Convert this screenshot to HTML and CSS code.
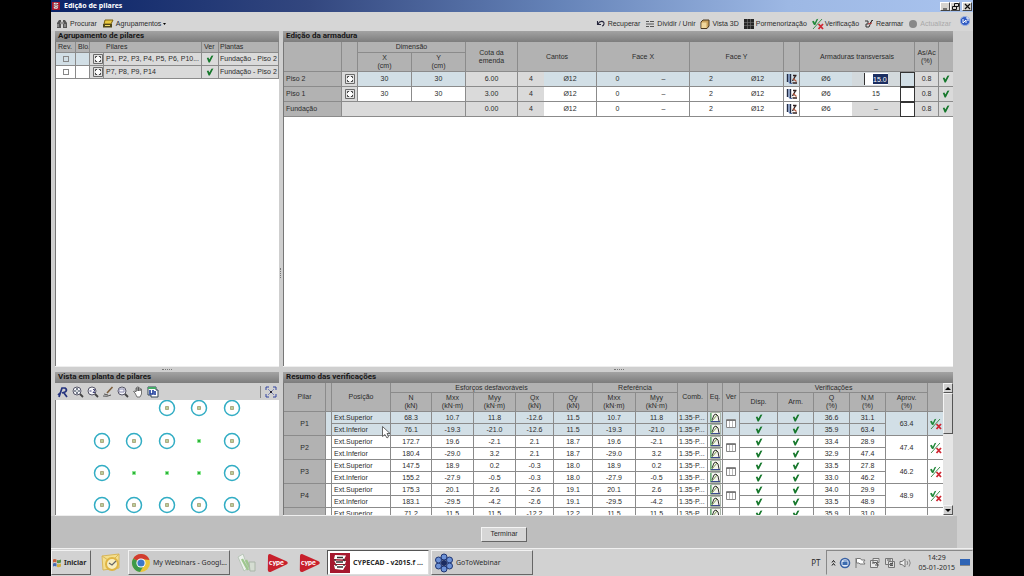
FILE: index.html
```html
<!DOCTYPE html>
<html lang="pt">
<head>
<meta charset="utf-8">
<title>Edição de pilares</title>
<link rel="stylesheet" href="styles.css">
</head>
<body>
<svg class="defs" aria-hidden="true">
  <symbol id="check" viewBox="0 0 8 8"><path d="M.8 3 2.400 2.500l1 2L5.400.8 7.400.4 3.800 7.400H2.600z" fill="#15772b"/></symbol>
  <symbol id="section" viewBox="0 0 10 10"><path d="M.5.5h9v9h-9z" fill="#e2e2e2" stroke="#6a6a6a"/><path d="M3 3h4v4H3z" fill="#fff"/><path d="M2.500 4V2.500H4M6 2.500h1.500V4M7.500 6v1.500H6M4 7.500H2.500V6" fill="none" stroke="#444"/></symbol>
  <symbol id="bars" viewBox="0 0 12 12"><path d="M1.500 1v8M4.500 1v9" stroke="#222c44" stroke-width="1.400"/><path d="M3 1v8q0 2 3 1.500" fill="none" stroke="#4668a8"/><path d="M6.500 8 10 2M7 2.500h3.500M6.500 10H11" stroke="#302020" stroke-width="1.400"/><path d="M7 5.500 10.500 8.500" stroke="#b4583c" stroke-width="1.200"/></symbol>
  <symbol id="graph" viewBox="0 0 11 11"><path d="M.5.5h10v10H.5z" fill="#f4f4ee" stroke="#a9b5a9"/><path d="M1 1v9" stroke="#3aa050"/><path d="M1 9.500h9" stroke="#3c4c90"/><path d="M2 8 4 3l2-1 2 2 1 5" fill="none" stroke="#333"/><path d="m2 9 5-6" stroke="#7c9a54"/></symbol>
  <symbol id="sheet" viewBox="0 0 10 9"><path d="M.5.5h9v8h-9z" fill="#fff" stroke="#888"/><path d="M0 1.500h10" stroke="#777"/><path d="M3.500 2v6M6.500 2v6" stroke="#bbb"/></symbol>
  <symbol id="verify" viewBox="0 0 12 12"><path d="m0 3.500 1.800-.8 1 2L4.500 1.300 6.300.8 3.300 7H2z" fill="#22883a"/><path d="M1 11 10 1" stroke="#3f8f4e"/><path d="m6.500 6 4.500 5M11 6l-4.500 5" stroke="#cf2733" stroke-width="1.800"/></symbol>
  <symbol id="cad" viewBox="0 0 20 20"><path d="M0 0h20v20H0z" fill="#a5182e"/><path d="m5 2 11 .5-2 4L4 6zM4 7.500l12 .5-1 3H6zM4 12h12l-3 5-8-1z" fill="#fff"/><path d="M7 4.500h6M6 9h7M7 14h6M5 6v2M13 6l2 2M6 11v2M14 11v2" fill="none" stroke="#333" stroke-width="1.300"/></symbol>
  <symbol id="lens" viewBox="0 0 12 12"><circle cx="5" cy="5" r="4" fill="#f4f4fa" stroke="#555566"/><path d="m8 8 3 3" stroke="#444" stroke-width="1.800"/></symbol>
</svg>
<div class="app">
  <header class="titlebar">
    <svg width="8" height="8"><use href="#cad"/></svg>
    <h1>Edição de pilares</h1>
    <span class="winbtns">
      <button aria-label="Minimizar"><svg width="7" height="7"><path d="M1 6h4" stroke="#111"/></svg></button>
      <button aria-label="Restaurar"><svg width="7" height="7"><path d="M2.500.5h4v3h-4zM.5 3.500h4v3h-4z" fill="none" stroke="#111"/></svg></button>
      <button aria-label="Fechar" class="close"><svg width="7" height="7"><path d="m1 1 5 5M6 1 1 6" stroke="#111" stroke-width="1.200"/></svg></button>
    </span>
  </header>

  <nav class="toolbar">
    <button><svg width="12" height="10"><path d="M1 9V4l2-3h2v8zM7 9V1h2l2 3v5z" fill="#555"/><path d="M5 3h2v2H5zM2 5v3M9 5v3" fill="#222" stroke="#bbb"/></svg>Procurar</button>
    <button><svg width="12" height="10"><path d="m3 1h8L9 5H2z" fill="#e8c940" stroke="#7a6112"/><path d="M1 5h9v3.500H1z" fill="#4f4718"/><path d="M3 6.500h5" stroke="#f3dc66"/></svg>Agrupamentos <svg width="3" height="3"><path d="M0 1h3L1.500 3z"/></svg></button>
    <span class="spacer"></span>
    <button><svg width="10" height="10"><path d="M1.500 2v3.500H5M2 5C4 1 8.500 2 8 5q-.5 2-2 2" fill="none" stroke="#26263c" stroke-width="1.100"/></svg>Recuperar</button>
    <button><svg width="10" height="10"><path d="M1 2.500h3M5 2.500h4M1 5h8M1 7.500h3M5 7.500h4" stroke="#555"/></svg>Dividir / Unir</button>
    <button><svg width="10" height="10"><path d="m1 3 2-2h6v6L7 9.500H1z" fill="#c9a15c" stroke="#4a3820"/><path d="M1.500 3.500h5v5.500h-5z" fill="#f0d79d"/></svg>Vista 3D</button>
    <button><svg width="10" height="10"><path d="M0 0h10v10H0z" fill="#252525"/><path d="M3.500 0v10M6.500 0v10M0 3.500h10M0 6.500h10" stroke="#777" stroke-width=".6"/></svg>Pormenorização</button>
    <button class="tight"><svg width="12" height="12"><use href="#verify"/></svg>Verificação</button>
    <button><svg width="10" height="10"><path d="M1 2h3v3H2v3h3M8 1 5 8M9 1 6 4" fill="none" stroke="#333"/><path d="m4 5 4-1" stroke="#b33"/></svg>Rearmar</button>
    <button disabled><svg width="10" height="10"><circle cx="5" cy="5" r="4" fill="#888"/></svg>Actualizar</button>
    <a class="help" href="#ajuda" aria-label="Ajuda"><svg width="10" height="10"><ellipse cx="5" cy="5" rx="4.800" ry="4.500" fill="#315cc4" stroke="#9db2e0"/><path d="M3 3v4l3-3v3M6 2h2v3" fill="none" stroke="#fff"/></svg></a>
  </nav>

  <main class="work">
    <section class="panel">
      <h2>Agrupamento de pilares</h2>
      <div class="body">
        <table class="grid groups">
          <colgroup><col class="w20"><col class="w14"><col class="w14"><col class="w98"><col class="w17"><col class="w60"></colgroup>
          <thead><tr><th>Rev.</th><th>Blo.</th><th class="nb"></th><th>Pilares</th><th>Ver</th><th>Plantas</th></tr></thead>
          <tbody>
            <tr class="sel"><td class="mid"><input type="checkbox" aria-label="Rev. P1"></td><td></td><td class="g"><svg width="10" height="10"><use href="#section"/></svg></td><td class="g">P1, P2, P3, P4, P5, P6, P10...</td><td class="g mid"><svg width="8" height="8"><use href="#check"/></svg></td><td class="g">Fundação - Piso 2</td></tr>
            <tr><td class="mid"><input type="checkbox" aria-label="Rev. P7"></td><td></td><td class="g"><svg width="10" height="10"><use href="#section"/></svg></td><td class="g">P7, P8, P9, P14</td><td class="g mid"><svg width="8" height="8"><use href="#check"/></svg></td><td class="g">Fundação - Piso 2</td></tr>
          </tbody>
        </table>
      </div>
    </section>

    <section class="panel">
      <h2>Edição da armadura</h2>
      <div class="body">
        <table class="grid rebar">
          <colgroup><col class="w58"><col class="w16"><col class="w54"><col class="w54"><col class="w52"><col class="w26"><col class="w53"><col class="w41"><col class="w52"><col class="w42"><col class="w52"><col class="w16"><col class="w52"><col class="w48"><col class="w15"><col class="w24"><col class="w15"></colgroup>
          <thead>
            <tr class="h1"><th rowspan="2"></th><th rowspan="2"></th><th colspan="2">Dimensão</th><th rowspan="2">Cota da<br>emenda</th><th rowspan="2" colspan="2">Cantos</th><th rowspan="2" colspan="2">Face X</th><th rowspan="2" colspan="2">Face Y</th><th rowspan="2"></th><th rowspan="2" colspan="3">Armaduras transversais</th><th rowspan="2">As/Ac<br>(%)</th><th rowspan="2"></th></tr>
            <tr class="h2"><th>X<br>(cm)</th><th>Y<br>(cm)</th></tr>
          </thead>
          <tbody>
            <tr class="sel"><th>Piso 2</th><td class="g"><svg width="10" height="10"><use href="#section"/></svg></td><td>30</td><td>30</td><td class="g">6.00</td><td class="g nb">4</td><td>Ø12</td><td class="nb">0</td><td>–</td><td class="nb">2</td><td>Ø12</td><td><svg width="12" height="12"><use href="#bars"/></svg></td><td class="nb">Ø6</td><td class="edit nb"><input type="text" value="15.0" aria-label="Separação"></td><td class="box"></td><td class="g">0.8</td><td class="g"><svg width="8" height="8"><use href="#check"/></svg></td></tr>
            <tr><th>Piso 1</th><td class="g"><svg width="10" height="10"><use href="#section"/></svg></td><td>30</td><td>30</td><td class="g">3.00</td><td class="g nb">4</td><td>Ø12</td><td class="nb">0</td><td>–</td><td class="nb">2</td><td>Ø12</td><td><svg width="12" height="12"><use href="#bars"/></svg></td><td class="nb">Ø6</td><td class="nb">15</td><td class="box"></td><td class="g">0.8</td><td class="g"><svg width="8" height="8"><use href="#check"/></svg></td></tr>
            <tr><th>Fundação</th><td class="g" colspan="3"></td><td class="g">0.00</td><td class="g nb">4</td><td>Ø12</td><td class="nb">0</td><td>–</td><td class="nb">2</td><td>Ø12</td><td><svg width="12" height="12"><use href="#bars"/></svg></td><td class="nb">Ø6</td><td class="g nb">–</td><td class="box"></td><td class="g">0.8</td><td class="g"><svg width="8" height="8"><use href="#check"/></svg></td></tr>
          </tbody>
        </table>
      </div>
    </section>

    <section class="panel">
      <h2>Vista em planta de pilares</h2>
      <div class="tools">
        <button aria-label="Redesenhar"><svg width="12" height="12"><path d="M2 11 5 2h3q3 2 0 4L5 7M7 7l3 4M1 9l2-2" fill="none" stroke="#24337e" stroke-width="1.700"/></svg></button>
        <button aria-label="Ver tudo"><svg width="12" height="12"><use href="#lens"/><path d="M5 2v6M2 5h6" stroke="#234" stroke-width="1.200"/><circle cx="5" cy="5" r="1" fill="#fff"/></svg></button>
        <button aria-label="Zoom x2"><svg width="12" height="12"><use href="#lens"/><path d="M2.500 5h2M6 3.500h1.500V5L6 6.500h2" fill="none" stroke="#447"/></svg></button>
        <button aria-label="Desenhar"><svg width="12" height="12"><path d="M10.500 1 5 7" stroke="#7b5c3a" stroke-width="1.600"/><path d="M1 10q4 1 8-1M2 8l4 1" fill="none" stroke="#555"/></svg></button>
        <button aria-label="Zoom janela"><svg width="12" height="12"><use href="#lens"/><path d="M2 3h5v3H2z" fill="none" stroke="#88a"/></svg></button>
        <button aria-label="Mover"><svg width="12" height="12"><path d="M3 7 1.500 5.500 3 5l1 1V2h1v3-4h1.500v4V2H8v3-2h1.500v5L8 11H5z" fill="#fff" stroke="#555" stroke-width=".8"/></svg></button>
        <button aria-label="Imprimir"><svg width="12" height="12"><path d="M1 1h8v3h2v7H4V9H1z" fill="#fff" stroke="#345"/><path d="M1 1h8v2H1z" fill="#4a6"/><path d="M3 4v4h3V4M8 5v4" fill="none" stroke="#1c3d9b" stroke-width="1.600"/></svg></button>
        <span class="spacer"></span>
        <button class="fit" aria-label="Ajustar"><svg width="12" height="12"><path d="M1 4V1h3M8 1h3v3M11 8v3H8M4 11H1V8" fill="none" stroke="#3345a0"/><path d="m3 3 6 6M9 3 3 9" stroke="#7a82b4"/><path d="M5 5h2v2H5z" fill="#223"/></svg></button>
      </div>
      <div class="body">
        <svg class="plan" width="222" height="114" role="img" aria-label="Planta de pilares">
          <g fill="none" stroke="#32adc4" stroke-width="1.500">
            <circle cx="111" cy="8" r="7.500"/><circle cx="143" cy="8" r="7.500"/><circle cx="176" cy="8" r="7.500"/>
            <circle cx="46" cy="41" r="7.500"/><circle cx="78" cy="41" r="7.500"/><circle cx="111" cy="41" r="7.500"/><circle cx="176" cy="41" r="7.500"/>
            <circle cx="46" cy="73" r="7.500"/><circle cx="176" cy="73" r="7.500"/>
            <circle cx="46" cy="105" r="7.500"/><circle cx="78" cy="105" r="7.500"/><circle cx="111" cy="105" r="7.500"/><circle cx="143" cy="105" r="7.500"/><circle cx="176" cy="105" r="7.500"/>
          </g>
          <path fill="#b9cf9a" stroke="#a39a70" stroke-width=".8" d="M109.500 6.500h3v3h-3zM141.500 6.500h3v3h-3zM174.500 6.500h3v3h-3zM44.500 39.500h3v3h-3zM76.500 39.500h3v3h-3zM109.500 39.500h3v3h-3zM174.500 39.500h3v3h-3zM44.500 71.500h3v3h-3zM174.500 71.500h3v3h-3zM44.500 103.500h3v3h-3zM76.500 103.500h3v3h-3zM109.500 103.500h3v3h-3zM141.500 103.500h3v3h-3zM174.500 103.500h3v3h-3z"/>
          <path fill="#2fae3a" stroke="#8ae890" d="M141.500 39.500h3v3h-3zM76.500 71.500h3v3h-3zM109.500 71.500h3v3h-3zM141.500 71.500h3v3h-3z"/>
        </svg>
      </div>
    </section>

    <section class="panel results">
      <h2>Resumo das verificações</h2>
      <div class="scroller">
      <div class="body">
        <table class="grid checks">
          <colgroup><col class="w42"><col class="w6"><col class="w59"><col class="w41"><col class="w42"><col class="w42"><col class="w38"><col class="w39"><col class="w43"><col class="w42"><col class="w30"><col class="w15"><col class="w17"><col class="w38"><col class="w36"><col class="w36"><col class="w36"><col class="w42"><col class="w16"></colgroup>
          <thead>
            <tr class="h1"><th rowspan="2">Pilar</th><th rowspan="2"></th><th rowspan="2">Posição</th><th colspan="5">Esforços desfavoráveis</th><th colspan="2">Referência</th><th rowspan="2">Comb.</th><th rowspan="2">Eq.</th><th rowspan="2">Ver</th><th colspan="5">Verificações</th><th rowspan="2"></th></tr>
            <tr class="h2"><th>N<br>(kN)</th><th>Mxx<br>(kN·m)</th><th>Myy<br>(kN·m)</th><th>Qx<br>(kN)</th><th>Qy<br>(kN)</th><th>Mxx<br>(kN·m)</th><th>Myy<br>(kN·m)</th><th>Disp.</th><th>Arm.</th><th>Q<br>(%)</th><th>N,M<br>(%)</th><th>Aprov.<br>(%)</th></tr>
          </thead>
          <tbody>
            <tr class="sel"><th rowspan="2">P1</th><td rowspan="2"></td><td class="pos">Ext.Superior</td><td>68.3</td><td>10.7</td><td>11.8</td><td>-12.6</td><td>11.5</td><td>10.7</td><td>11.8</td><td class="cmb">1.35·P...</td><td><svg width="11" height="11"><use href="#graph"/></svg></td><td rowspan="2"><svg width="10" height="9"><use href="#sheet"/></svg></td><td><svg width="8" height="8"><use href="#check"/></svg></td><td><svg width="8" height="8"><use href="#check"/></svg></td><td>36.6</td><td>31.1</td><td rowspan="2">63.4</td><td rowspan="2"><svg width="12" height="12"><use href="#verify"/></svg></td></tr>
            <tr class="sel"><td class="pos">Ext.Inferior</td><td>76.1</td><td>-19.3</td><td>-21.0</td><td>-12.6</td><td>11.5</td><td>-19.3</td><td>-21.0</td><td class="cmb">1.35·P...</td><td><svg width="11" height="11"><use href="#graph"/></svg></td><td><svg width="8" height="8"><use href="#check"/></svg></td><td><svg width="8" height="8"><use href="#check"/></svg></td><td>35.9</td><td>63.4</td></tr>
            <tr><th rowspan="2">P2</th><td rowspan="2"></td><td class="pos">Ext.Superior</td><td>172.7</td><td>19.6</td><td>-2.1</td><td>2.1</td><td>18.7</td><td>19.6</td><td>-2.1</td><td class="cmb">1.35·P...</td><td><svg width="11" height="11"><use href="#graph"/></svg></td><td rowspan="2"><svg width="10" height="9"><use href="#sheet"/></svg></td><td><svg width="8" height="8"><use href="#check"/></svg></td><td><svg width="8" height="8"><use href="#check"/></svg></td><td>33.4</td><td>28.9</td><td rowspan="2">47.4</td><td rowspan="2"><svg width="12" height="12"><use href="#verify"/></svg></td></tr>
            <tr><td class="pos">Ext.Inferior</td><td>180.4</td><td>-29.0</td><td>3.2</td><td>2.1</td><td>18.7</td><td>-29.0</td><td>3.2</td><td class="cmb">1.35·P...</td><td><svg width="11" height="11"><use href="#graph"/></svg></td><td><svg width="8" height="8"><use href="#check"/></svg></td><td><svg width="8" height="8"><use href="#check"/></svg></td><td>32.9</td><td>47.4</td></tr>
            <tr><th rowspan="2">P3</th><td rowspan="2"></td><td class="pos">Ext.Superior</td><td>147.5</td><td>18.9</td><td>0.2</td><td>-0.3</td><td>18.0</td><td>18.9</td><td>0.2</td><td class="cmb">1.35·P...</td><td><svg width="11" height="11"><use href="#graph"/></svg></td><td rowspan="2"><svg width="10" height="9"><use href="#sheet"/></svg></td><td><svg width="8" height="8"><use href="#check"/></svg></td><td><svg width="8" height="8"><use href="#check"/></svg></td><td>33.5</td><td>27.8</td><td rowspan="2">46.2</td><td rowspan="2"><svg width="12" height="12"><use href="#verify"/></svg></td></tr>
            <tr><td class="pos">Ext.Inferior</td><td>155.2</td><td>-27.9</td><td>-0.5</td><td>-0.3</td><td>18.0</td><td>-27.9</td><td>-0.5</td><td class="cmb">1.35·P...</td><td><svg width="11" height="11"><use href="#graph"/></svg></td><td><svg width="8" height="8"><use href="#check"/></svg></td><td><svg width="8" height="8"><use href="#check"/></svg></td><td>33.0</td><td>46.2</td></tr>
            <tr><th rowspan="2">P4</th><td rowspan="2"></td><td class="pos">Ext.Superior</td><td>175.3</td><td>20.1</td><td>2.6</td><td>-2.6</td><td>19.1</td><td>20.1</td><td>2.6</td><td class="cmb">1.35·P...</td><td><svg width="11" height="11"><use href="#graph"/></svg></td><td rowspan="2"><svg width="10" height="9"><use href="#sheet"/></svg></td><td><svg width="8" height="8"><use href="#check"/></svg></td><td><svg width="8" height="8"><use href="#check"/></svg></td><td>34.0</td><td>29.9</td><td rowspan="2">48.9</td><td rowspan="2"><svg width="12" height="12"><use href="#verify"/></svg></td></tr>
            <tr><td class="pos">Ext.Inferior</td><td>183.1</td><td>-29.5</td><td>-4.2</td><td>-2.6</td><td>19.1</td><td>-29.5</td><td>-4.2</td><td class="cmb">1.35·P...</td><td><svg width="11" height="11"><use href="#graph"/></svg></td><td><svg width="8" height="8"><use href="#check"/></svg></td><td><svg width="8" height="8"><use href="#check"/></svg></td><td>33.5</td><td>48.9</td></tr>
            <tr><th></th><td></td><td class="pos">Ext.Superior</td><td>71.2</td><td>11.5</td><td>11.5</td><td>-12.2</td><td>12.2</td><td>11.5</td><td>11.5</td><td class="cmb">1.35·P...</td><td><svg width="11" height="11"><use href="#graph"/></svg></td><td></td><td><svg width="8" height="8"><use href="#check"/></svg></td><td><svg width="8" height="8"><use href="#check"/></svg></td><td>35.9</td><td>31.0</td><td></td><td></td></tr>
          </tbody>
        </table>
      </div>
      <div class="scrollbar">
        <button aria-label="Subir"><svg width="7" height="5"><path d="M0 4h6L3 1z"/></svg></button>
        <span class="thumb"></span>
        <button class="down" aria-label="Descer"><svg width="7" height="5"><path d="M0 1h6L3 4z"/></svg></button>
      </div>
      </div>
      <svg class="pointer" width="9" height="13"><path d="M.5.5v10L3 8.500 5 12l1.500-1L5 7.500h3z" fill="#fff" stroke="#444" stroke-width=".8"/></svg>
    </section>
    <span class="grip top" aria-hidden="true"></span>
    <span class="grip side" aria-hidden="true"></span>
    <span class="grip low" aria-hidden="true"></span>
  </main>

  <footer class="actions"><button>Terminar</button></footer>

  <div class="taskbar">
    <button class="start"><svg width="10" height="10"><path d="M1 1.500q2-1 3.500 0v3q-2-1-3.500 0z" fill="#c8603c"/><path d="M5 2q2 .8 4-.5v3q-2 1-4 .5z" fill="#57914c"/><path d="M1 5.500q2-1 3.500 0v3q-2-1-3.500 0z" fill="#4568b0"/><path d="M5 6q2 .8 4-.5v3q-2 1-4 .5z" fill="#d4b040"/></svg>Iniciar</button>
    <a class="quick mail" href="#outlook" aria-label="Outlook"><svg width="22" height="22"><path d="M2 4 19 2v14L3 18z" fill="#f4df8d" stroke="#d8b65a"/><path d="m2 4 9 6 8-8" fill="none" stroke="#d8b65a"/><circle cx="12" cy="12" r="6" fill="#f8eec0" stroke="#e0b544" stroke-width="2"/><path d="m9 11 3 2 4-4" fill="none" stroke="#666" stroke-width="1.200"/></svg></a>
    <button class="task"><svg width="20" height="20"><circle cx="10" cy="10" r="9" fill="#e9c53a"/><path d="M10 10 2.200 5.500A9 9 0 0 1 18.500 7L10 6z" fill="#d13c30"/><path d="M10 10 2.200 5.500A9 9 0 0 0 9 19l4-7z" fill="#3f9a4a"/><circle cx="10" cy="10" r="4.600" fill="#fff"/><circle cx="10" cy="10" r="3.600" fill="#3c78c8"/></svg>My Webinars - Googl...</button>
    <a class="quick msn" href="#docs" aria-label="Documentos"><svg width="20" height="20"><path d="m1 4 5-3 5 14-4 3z" fill="#eef3ee" stroke="#b9c6b9"/><path d="m5 6 6 11M9 7l5 10" stroke="#9fc78f" stroke-width="2.400"/><path d="M12 9h6v9h-5z" fill="#d5ddd2" stroke="#aab5a8"/></svg></a>
    <a class="quick logo" href="#cype1" aria-label="CYPE"><svg width="22" height="20"><path d="M3 1 19.500 8.200q2.500 1.600 0 3.400L3.500 19Q.8 19.500.8 17L1 3Q1 .8 3 1z" fill="#c8202c"/><text x="2" y="12">cype</text></svg></a>
    <a class="quick logo" href="#cype2" aria-label="CYPE"><svg width="22" height="20"><path d="M3 1 19.500 8.200q2.500 1.600 0 3.400L3.500 19Q.8 19.500.8 17L1 3Q1 .8 3 1z" fill="#c8202c"/><text x="2" y="12">cype</text></svg></a>
    <button class="task active"><svg width="20" height="20"><use href="#cad"/></svg>CYPECAD - v2015.f ...</button>
    <button class="task"><svg width="20" height="20"><g fill="#6d92d6" stroke="#1e3472"><circle cx="10" cy="4" r="3"/><circle cx="15.500" cy="7" r="3"/><circle cx="15.500" cy="13" r="3"/><circle cx="10" cy="16" r="3"/><circle cx="4.500" cy="13" r="3"/><circle cx="4.500" cy="7" r="3"/></g><circle cx="10" cy="10" r="3" fill="#1c2c60"/></svg>GoToWebinar</button>
    <span class="spacer"></span>
    <span class="lang">PT</span>
    <div class="tray">
      <svg width="5" height="8"><path d="m1 3.500 1.500-2L4 3.500M1 6.500l1.500-2 1.500 2" fill="none" stroke="#111"/></svg>
      <svg width="12" height="12"><circle cx="6" cy="6" r="4.500" fill="#dfe8f6" stroke="#3a62a4" stroke-width="1.600"/><path d="M3.500 5h5v3h-5z" fill="#3c6cb0"/><path d="M4.500 4h4" stroke="#3c6cb0"/></svg>
      <svg width="12" height="12"><path d="M2 1v10" stroke="#777"/><path d="M2.500 1.500h4l1 1.500H11l-1.500 2L11 7H6L5 6H2.500z" fill="#fff" stroke="#777"/></svg>
      <svg width="12" height="12"><path d="M1.500 3.500h7v7h-7zM4 1.500h6v4H4z" fill="#e8e8e8" stroke="#777"/><path d="M3 6h3M6 5l3 3M6 8h4" stroke="#555"/></svg>
      <svg width="12" height="12"><path d="M1.500 1.500h7v6h-7zM4.500 4.500h6v6h-6z" fill="#ddd" stroke="#777"/><path d="M6 6.500h3M6 8.500h3M3 3h4" stroke="#555"/></svg>
      <svg width="12" height="12"><path d="M1 4.500h2L6 2v8L3 7.500H1z" fill="#eee" stroke="#777"/><path d="M8 4q1.500 2 0 4M10 2.500q2.500 3.500 0 7" fill="none" stroke="#888"/></svg>
      <span class="clock">14:29<br>05-01-2015</span>
      <svg width="11" height="9"><path d="M1 1h10v6H1z" fill="#2f64b5"/><path d="M1 7.500h10" stroke="#888"/></svg>
    </div>
  </div>
</div>
</body>
</html>
```
FILE: styles.css
```css
* { box-sizing: border-box; }
body {
  margin: 0;
  background: #000;
  color: #2b2b2b;
  font: 7px/8px "Liberation Sans", Arial, sans-serif;
}
button, input { font: inherit; color: inherit; margin: 0; padding: 0; border: 0; background: none; }
svg { display: block; flex: none; }
.defs { position: absolute; width: 0; height: 0; }
.spacer { flex: 1; }

.app {
  display: grid;
  grid-template-rows: 12px 19px minmax(0, 1fr) 32px 28px;
  height: 100vh;
  margin: 0 51px;
  background: #cfcfcf;
}

.titlebar {
  display: flex;
  align-items: center;
  gap: 4px;
  padding: 0 1px;
  background: linear-gradient(90deg, #0b2468, #33477f 28%, #6583b8 55%, #9db8e4 80%, #a9c3ee);
}
h1 { flex: 1; margin: 0; color: #fff; font: bold 7px/10px "Noto Sans", sans-serif; }
.winbtns { display: flex; }
.winbtns button { display: grid; place-items: center; width: 10px; height: 9px; background: #d6d3ce; border: 1px solid; border-color: #fff #444 #444 #fff; }
.winbtns .close { margin-left: 2px; }

.toolbar { display: flex; align-items: center; gap: 5px; padding: 4px 3px 0 5px; background: #d6d6d6; }
.toolbar button { display: flex; align-items: center; gap: 2px; white-space: nowrap; }
.toolbar .tight { gap: 1px; }
.toolbar button:disabled { color: #a9a9a9; }
.help { margin: 0 0 5px 4px; }

.work {
  position: relative;
  display: grid;
  grid-template: minmax(0, 1fr) 144px / 224px minmax(0, 1fr);
  gap: 5px 4px;
  padding: 0 20px 0 4px;
}
.panel { position: relative; display: flex; flex-direction: column; min-height: 0; border-bottom: 1px solid #eee; }
h2 {
  margin: 0;
  padding: 0 3px 1px;
  background: linear-gradient(#a3a3a3, #7d7d7d);
  color: #161616;
  font: bold 8px/10px Roboto, sans-serif;
}
.body { flex: 1; min-height: 0; min-width: 0; overflow: hidden; background: #fff; border-left: 1px solid #777; }

.grid { width: 100%; table-layout: fixed; border-collapse: separate; border-spacing: 0; }
.grid th, .grid td {
  height: 12px;
  padding: 0;
  border: 0 solid #8b8b8b;
  border-width: 0 1px 1px 0;
  text-align: center;
  vertical-align: middle;
  font-weight: normal;
  white-space: nowrap;
  overflow: hidden;
}
.grid th { background: #b2b2b2; }
.grid td svg { margin: -1px auto; }
.grid .sel td { background: #d2dfe6; }
.grid td.g, .grid .sel td.g { background: #dadada; }
.grid .nb { border-right-width: 0; }

.groups th, .groups td { text-align: left; padding-left: 2px; }
.groups thead th { height: 11px; }
.groups th:nth-child(6), .groups td:nth-child(6) { padding-left: 1px; }
.groups .mid { text-align: center; padding: 0; }
.groups tbody td { height: 13px; }
input[type="checkbox"] { appearance: none; display: block; width: 6px; height: 6px; margin: 0 auto; border: 1px solid #888; }

.rebar .h1 th { height: 11px; }
.rebar .h2 th { height: 19px; }
.rebar tbody td, .rebar tbody th { height: 15px; }
.rebar tbody th { text-align: left; padding-left: 2px; }
.rebar tbody td.box { border: 1px solid #333; }
.rebar td.edit { background: #d3d9dc; }
.rebar input {
  display: block;
  width: 24px;
  height: 12px;
  margin: 0 auto;
  padding: 1px 0 1px 8px;
  border-left: 1px solid #333;
  background: linear-gradient(#1c2f62, #1c2f62) content-box, #fff;
  color: #fff;
}

.checks .h1 th { height: 10px; }
.checks .h2 th { height: 19px; }
.checks .pos { text-align: left; padding-left: 2px; }
.checks .cmb { text-align: left; padding-left: 1px; }
.scroller { flex: 1; display: flex; min-height: 0; }
.scrollbar { display: flex; flex-direction: column; width: 10px; background: #e6e6e6; }
.scrollbar button, .thumb { display: grid; place-items: center; height: 10px; background: #d2d2d2; border: 1px solid; border-color: #f4f4f4 #555 #555 #f4f4f4; }
.scrollbar .thumb { height: 41px; }
.scrollbar .down { margin-top: auto; }
.pointer { position: absolute; left: 99px; top: 54px; }

.tools { display: flex; align-items: center; gap: 3px; height: 17px; padding: 0 2px; background: #d0d0d0; }
.tools .fit { padding-left: 4px; border-left: 1px solid #888; }

.grip { position: absolute; border: 0 dotted #777; }
.grip.top { left: 111px; bottom: 146px; width: 10px; border-top-width: 1px; }
.grip.low { left: 563px; bottom: 146px; width: 10px; border-top-width: 1px; }
.grip.side { left: 229px; top: 237px; height: 10px; border-left-width: 1px; }

.w6 { width: 6px; } .w14 { width: 14px; } .w15 { width: 15px; } .w16 { width: 16px; }
.w17 { width: 17px; } .w20 { width: 20px; } .w24 { width: 24px; } .w26 { width: 26px; }
.w30 { width: 30px; } .w36 { width: 36px; } .w38 { width: 38px; } .w39 { width: 39px; }
.w41 { width: 41px; } .w42 { width: 42px; } .w43 { width: 43px; } .w48 { width: 48px; }
.w52 { width: 52px; } .w53 { width: 53px; } .w54 { width: 54px; } .w58 { width: 58px; }
.w59 { width: 59px; } .w60 { width: 60px; } .w98 { width: 98px; }

.actions { display: grid; place-items: center; margin-right: 16px; padding-top: 4px; background: #bebebe; }
.actions button { width: 46px; height: 15px; background: #d6d6d6; border: 1px solid; border-color: #f4f4f4 #666 #666 #f4f4f4; }

.taskbar {
  display: flex;
  align-items: center;
  background: #d2d2d2;
  border-top: 1px solid #f0f0f0;
  font: 7px/14px "Noto Sans", sans-serif;
}
.start, .task { display: flex; align-items: center; gap: 2px; height: 25px; border: 1px solid; border-color: #f2f2f2 #666 #666 #f2f2f2; white-space: nowrap; }
.start { width: 40px; font-weight: bold; }
.task { width: 102px; padding-left: 2px; background: #cbcbcb; }
.task + .task { margin-left: 2px; }
.task.active { gap: 3px; background: #fff; border-color: #555 #ddd #ddd #555; font-weight: bold; }
.mail { margin: 0 6px 0 9px; }
.msn { margin: 0 10px 0 7px; }
.logo { margin-right: 10px; }
.logo text { fill: #fff; font: 900 7px Lato, sans-serif; }
.logo + .task { margin-left: -4px; }
.lang { margin-right: 6px; font-size: 8px; }
.tray { display: flex; align-items: center; gap: 3px; height: 25px; padding: 0 2px 0 4px; border: 1px solid; border-color: #888 transparent transparent #888; }
.clock { margin: 0 1px 0 4px; text-align: center; line-height: 10px; }
```
